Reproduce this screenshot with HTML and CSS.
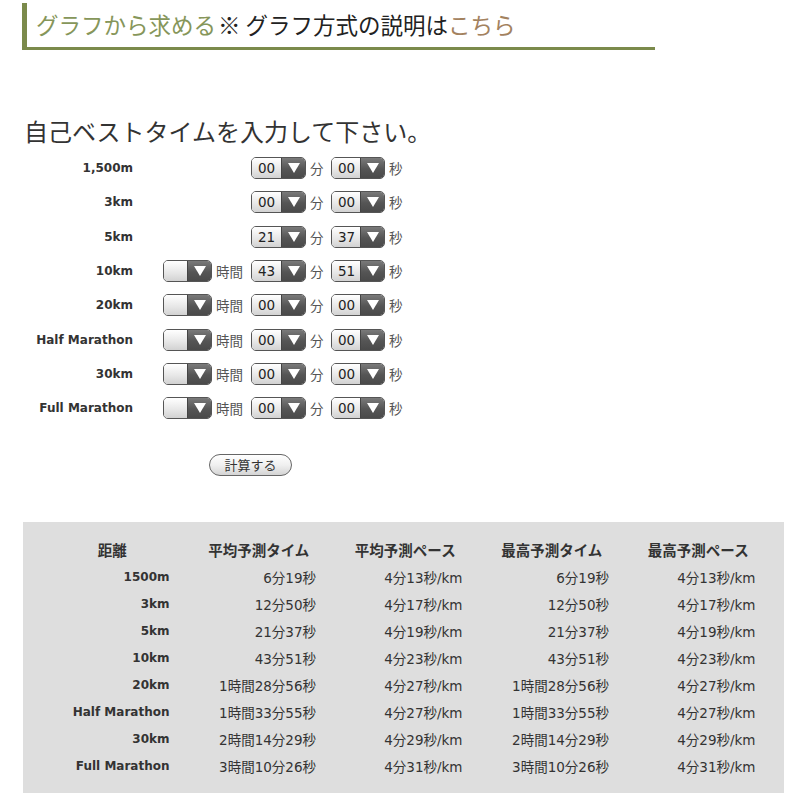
FILE: index.html
```html
<!DOCTYPE html>
<html lang="ja">
<head>
<meta charset="utf-8">
<title>グラフから求める</title>
<link rel="stylesheet" href="styles.css">
</head>
<body>
<div class="page">
  <h2 class="head"><span class="g">グラフから求める</span><span class="mark">※</span> グラフ方式の説明は<a class="link" href="#">こちら</a></h2>

  <h3 class="title">自己ベストタイムを入力して下さい。</h3>

  <div class="form">
    <div class="row">
      <div class="lbl">1,500m</div>
      <div class="hcell"></div>
      <div class="mcell"><div class="sel sm"><span class="val">00</span><span class="arr"><i></i></span></div><span class="unit">分</span></div>
      <div class="scell"><div class="sel ss"><span class="val">00</span><span class="arr"><i></i></span></div><span class="unit">秒</span></div>
    </div>
    <div class="row">
      <div class="lbl">3km</div>
      <div class="hcell"></div>
      <div class="mcell"><div class="sel sm"><span class="val">00</span><span class="arr"><i></i></span></div><span class="unit">分</span></div>
      <div class="scell"><div class="sel ss"><span class="val">00</span><span class="arr"><i></i></span></div><span class="unit">秒</span></div>
    </div>
    <div class="row">
      <div class="lbl">5km</div>
      <div class="hcell"></div>
      <div class="mcell"><div class="sel sm"><span class="val">21</span><span class="arr"><i></i></span></div><span class="unit">分</span></div>
      <div class="scell"><div class="sel ss"><span class="val">37</span><span class="arr"><i></i></span></div><span class="unit">秒</span></div>
    </div>
    <div class="row">
      <div class="lbl">10km</div>
      <div class="hcell"><div class="sel sh"><span class="val"></span><span class="arr"><i></i></span></div><span class="unit">時間</span></div>
      <div class="mcell"><div class="sel sm"><span class="val">43</span><span class="arr"><i></i></span></div><span class="unit">分</span></div>
      <div class="scell"><div class="sel ss"><span class="val">51</span><span class="arr"><i></i></span></div><span class="unit">秒</span></div>
    </div>
    <div class="row">
      <div class="lbl">20km</div>
      <div class="hcell"><div class="sel sh"><span class="val"></span><span class="arr"><i></i></span></div><span class="unit">時間</span></div>
      <div class="mcell"><div class="sel sm"><span class="val">00</span><span class="arr"><i></i></span></div><span class="unit">分</span></div>
      <div class="scell"><div class="sel ss"><span class="val">00</span><span class="arr"><i></i></span></div><span class="unit">秒</span></div>
    </div>
    <div class="row">
      <div class="lbl">Half Marathon</div>
      <div class="hcell"><div class="sel sh"><span class="val"></span><span class="arr"><i></i></span></div><span class="unit">時間</span></div>
      <div class="mcell"><div class="sel sm"><span class="val">00</span><span class="arr"><i></i></span></div><span class="unit">分</span></div>
      <div class="scell"><div class="sel ss"><span class="val">00</span><span class="arr"><i></i></span></div><span class="unit">秒</span></div>
    </div>
    <div class="row">
      <div class="lbl">30km</div>
      <div class="hcell"><div class="sel sh"><span class="val"></span><span class="arr"><i></i></span></div><span class="unit">時間</span></div>
      <div class="mcell"><div class="sel sm"><span class="val">00</span><span class="arr"><i></i></span></div><span class="unit">分</span></div>
      <div class="scell"><div class="sel ss"><span class="val">00</span><span class="arr"><i></i></span></div><span class="unit">秒</span></div>
    </div>
    <div class="row">
      <div class="lbl">Full Marathon</div>
      <div class="hcell"><div class="sel sh"><span class="val"></span><span class="arr"><i></i></span></div><span class="unit">時間</span></div>
      <div class="mcell"><div class="sel sm"><span class="val">00</span><span class="arr"><i></i></span></div><span class="unit">分</span></div>
      <div class="scell"><div class="sel ss"><span class="val">00</span><span class="arr"><i></i></span></div><span class="unit">秒</span></div>
    </div>
  </div>

  <div class="btnwrap"><button class="btn" type="button">計算する</button></div>

  <div class="result">
    <table class="tbl">
      <thead>
        <tr><th>距離</th><th>平均予測タイム</th><th>平均予測ペース</th><th>最高予測タイム</th><th>最高予測ペース</th></tr>
      </thead>
      <tbody>
        <tr><td class="d">1500m</td><td>6分19秒</td><td>4分13秒/km</td><td>6分19秒</td><td>4分13秒/km</td></tr>
        <tr><td class="d">3km</td><td>12分50秒</td><td>4分17秒/km</td><td>12分50秒</td><td>4分17秒/km</td></tr>
        <tr><td class="d">5km</td><td>21分37秒</td><td>4分19秒/km</td><td>21分37秒</td><td>4分19秒/km</td></tr>
        <tr><td class="d">10km</td><td>43分51秒</td><td>4分23秒/km</td><td>43分51秒</td><td>4分23秒/km</td></tr>
        <tr><td class="d">20km</td><td>1時間28分56秒</td><td>4分27秒/km</td><td>1時間28分56秒</td><td>4分27秒/km</td></tr>
        <tr><td class="d">Half Marathon</td><td>1時間33分55秒</td><td>4分27秒/km</td><td>1時間33分55秒</td><td>4分27秒/km</td></tr>
        <tr><td class="d">30km</td><td>2時間14分29秒</td><td>4分29秒/km</td><td>2時間14分29秒</td><td>4分29秒/km</td></tr>
        <tr><td class="d">Full Marathon</td><td>3時間10分26秒</td><td>4分31秒/km</td><td>3時間10分26秒</td><td>4分31秒/km</td></tr>
      </tbody>
    </table>
  </div>
</div>
</body>
</html>
```

FILE: styles.css
```css
html, body {
  margin: 0;
  padding: 0;
  background: #fff;
}
body {
  font-family: "DejaVu Sans", "Noto Sans CJK JP", sans-serif;
  color: #222;
}
.page {
  width: 800px;
  padding-top: 3px;
}
.head {
  margin: 0 0 0 22px;
  width: 619px;
  height: 44px;
  border-left: 5px solid #7b8a4b;
  border-bottom: 3px solid #7b8a4b;
  padding-left: 9px;
  font-family: "Noto Sans CJK JP", sans-serif;
  font-weight: normal;
  font-size: 22.5px;
  line-height: 42px;
  color: #222;
  white-space: nowrap;
}
.head .g {
  color: #86965a;
}
.head .mark {
  font-weight: bold;
  margin-left: 2px;
}
.head .link {
  color: #a3825f;
  text-decoration: none;
}
.title {
  margin: 66px 0 0 24px;
  height: 30px;
  font-family: "Noto Sans CJK JP", sans-serif;
  font-weight: normal;
  font-size: 24px;
  line-height: 30px;
  color: #333;
  white-space: nowrap;
}
.form {
  margin-top: 5px;
  display: flex;
  flex-direction: column;
}
.row {
  display: flex;
  align-items: center;
  height: 34.3px;
}
.lbl {
  width: 133px;
  text-align: right;
  font-weight: bold;
  font-size: 12px;
  color: #333;
  margin-right: 30px;
}
.hcell {
  width: 88px;
  display: flex;
  align-items: center;
}
.mcell {
  width: 80px;
  display: flex;
  align-items: center;
}
.scell {
  display: flex;
  align-items: center;
}
.unit {
  font-family: "Noto Sans CJK JP", sans-serif;
  font-size: 13.5px;
  color: #555;
  margin-left: 4px;
}
.sel {
  display: flex;
  height: 20px;
  border: 1px solid #555;
  border-radius: 5px;
  overflow: hidden;
  box-sizing: content-box;
}
.sh { width: 47px; }
.sm { width: 53px; }
.ss { width: 52px; }
.val {
  flex: 1;
  background: linear-gradient(#ffffff, #e6e6e6 60%, #d2d2d2);
  font-size: 13.5px;
  line-height: 20px;
  padding-left: 6px;
  color: #222;
}
.arr {
  width: 23px;
  background: linear-gradient(#7a7a7a, #555 55%, #4a4a4a);
  border-left: 1px solid #444;
  display: flex;
  align-items: center;
  justify-content: center;
}
.arr i {
  display: block;
  width: 0;
  height: 0;
  border-left: 6px solid transparent;
  border-right: 6px solid transparent;
  border-top: 10px solid #fff;
}
.btnwrap {
  margin-top: 29px;
  padding-left: 209px;
}
.btn {
  width: 83px;
  height: 22px;
  border: 1px solid #666;
  border-radius: 11px;
  background: linear-gradient(#ffffff, #f0f0f0 50%, #d4d4d4);
  font-family: "Noto Sans CJK JP", sans-serif;
  font-size: 13px;
  color: #333;
  padding: 0;
  line-height: 20px;
}
.result {
  margin: 46px 0 0 23px;
  width: 761px;
  height: 271px;
  background: #dedede;
  padding: 14px 0 0 16px;
  box-sizing: border-box;
}
.tbl {
  border-collapse: collapse;
  table-layout: fixed;
  width: 732.5px;
}
.tbl th, .tbl td {
  width: 146.5px;
  height: 27px;
  padding: 0;
}
.tbl th {
  font-size: 14.5px;
  font-weight: bold;
  text-align: center;
  color: #333;
}
.tbl td {
  font-size: 13.5px;
  text-align: right;
  padding-right: 16px;
  color: #333;
}
.tbl td.d {
  font-weight: bold;
  font-size: 12px;
  color: #333;
}
```
